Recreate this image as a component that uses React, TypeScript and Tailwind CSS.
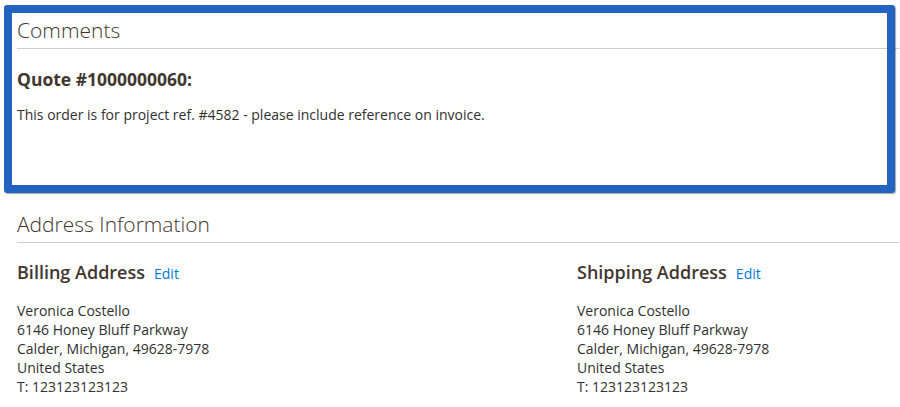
const font = { fontFamily: '"Open Sans", "Noto Sans", sans-serif' };

const address = [
  "Veronica Costello",
  "6146 Honey Bluff Parkway",
  "Calder, Michigan, 49628-7978",
  "United States",
  "T: 123123123123",
];

function AddressBlock({ title }: { title: string }) {
  return (
    <div>
      <div className="flex items-baseline gap-[9px]">
        <h3 className="text-[18px] font-semibold text-[#41362f] leading-[24px]">{title}</h3>
        <a href="#" className="text-[14px] text-[#007bdb]">
          Edit
        </a>
      </div>
      <address className="not-italic mt-[17px] text-[14px] leading-[19px] text-[#303030]">
        {address.map((line) => (
          <div key={line}>{line}</div>
        ))}
      </address>
    </div>
  );
}

export default function App() {
  return (
    <div className="relative w-[900px] h-[407px] bg-white overflow-hidden" style={font}>
      <div className="pl-[17px] pr-[1px]">
        {/* Comments */}
        <section className="pt-[17px] h-[200px]">
          <div className="border-b border-[#cccccc] pb-[5px]">
            <h2 className="text-[21px] font-light text-[#41362f] leading-[26px]">Comments</h2>
          </div>
          <h4 className="mt-[18px] text-[17.5px] font-bold text-[#41362f] leading-[24px]">
            Quote #1000000060:
          </h4>
          <p className="mt-[14px] text-[14px] leading-[19px] text-[#303030]">
            This order is for project ref. #4582 - please include reference on invoice.
          </p>
        </section>

        {/* Address Information */}
        <section className="pt-[11px]">
          <div className="border-b border-[#cccccc] pb-[5px]">
            <h2 className="text-[21px] font-light text-[#41362f] leading-[26px]">Address Information</h2>
          </div>
          <div className="grid grid-cols-[560px_1fr] mt-[17px]">
            <AddressBlock title="Billing Address" />
            <AddressBlock title="Shipping Address" />
          </div>
        </section>
      </div>

      {/* highlight frame */}
      <div className="absolute left-[4px] top-[5px] w-[891px] h-[188px] border-[8px] border-[#2264c0] rounded-[3px] shadow-[1px_1px_1px_rgba(0,0,0,0.35)] pointer-events-none" />
    </div>
  );
}
